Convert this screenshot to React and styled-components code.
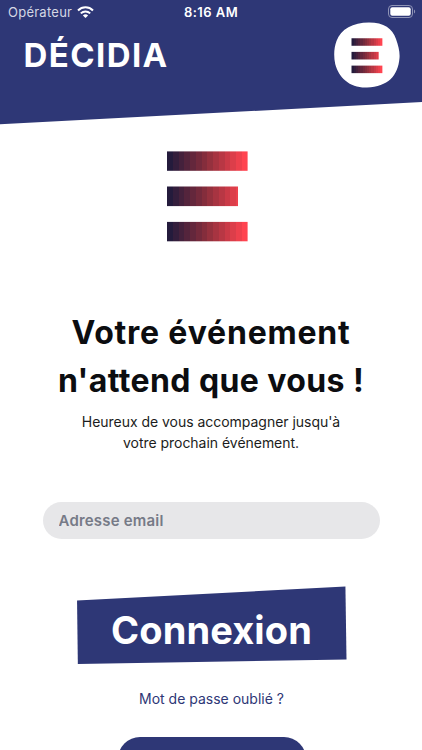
import React, { useState } from 'react';
import styled, { createGlobalStyle } from 'styled-components';

const navy = '#2e3776';

const GlobalStyle = createGlobalStyle`
  * {
    box-sizing: border-box;
  }

  body {
    margin: 0;
    background: #fff;
    overflow: hidden;
    font-family: Inter, "Liberation Sans", sans-serif;
  }
`;

const Screen = styled.div`
  display: flex;
  flex-direction: column;
  height: 750px;
  overflow: hidden;
`;

const Header = styled.header`
  flex: none;
  height: 125px;
  background: ${navy};
  color: #fff;
  clip-path: polygon(0 0, 100% 0, 100% 102px, 0 124.3px);
`;

const StatusBar = styled.div`
  display: grid;
  grid-template-columns: 1fr auto 1fr;
  align-items: center;
  height: 22px;
  padding: 2px 6px 0 8px;
  font-size: 13px;
  line-height: 20px;
`;

const Carrier = styled.div`
  display: flex;
  align-items: center;
  gap: 5px;
  color: #d5d7e4;
  letter-spacing: 0.25px;
`;

const Clock = styled.div`
  padding-right: 2px;
  font-weight: 600;
  letter-spacing: 0.45px;
`;

const BatteryIcon = styled.svg`
  justify-self: end;
`;

const TopRow = styled.div`
  display: flex;
  justify-content: space-between;
  padding: 0 22.5px 0 23.5px;
`;

const Brand = styled.div`
  padding-top: 13px;
  font-size: 33px;
  font-weight: 700;
  line-height: 40px;
  letter-spacing: 1.4px;
`;

const Main = styled.main`
  display: flex;
  flex-direction: column;
  align-items: center;
  padding-top: 26px;
`;

const LogoWrap = styled.div`
  display: flex;
  margin-right: 8px;
`;

const Title = styled.h1`
  margin: 67px 0 0;
  color: #0c0d10;
  font-size: 32px;
  font-weight: 700;
  line-height: 48px;
  text-align: center;
  white-space: nowrap;
`;

const TitleLine = styled.span`
  display: block;
  letter-spacing: ${p => p.$spacing};
`;

const Subtitle = styled.p`
  margin: 6px 0 0;
  color: #1b1c20;
  font-size: 14px;
  line-height: 21px;
  letter-spacing: -0.03px;
  text-align: center;
  white-space: nowrap;
`;

const EmailInput = styled.input`
  width: 337px;
  height: 37px;
  margin-top: 49px;
  padding: 0 16px 1px;
  border: 0;
  border-radius: 19px;
  background: #e7e7e9;
  color: #0c0d10;
  font-family: inherit;
  font-size: 15px;
  font-weight: 600;
  letter-spacing: 0.2px;

  &::placeholder {
    color: #767a87;
    opacity: 1;
  }
`;

const LoginButton = styled.button`
  width: 270px;
  height: 78px;
  margin-top: 47px;
  margin-left: 1px;
  padding: 9px 0 0;
  border: 0;
  background: ${navy};
  color: #fff;
  font-family: inherit;
  font-size: 38px;
  font-weight: 700;
  letter-spacing: 0.1px;
  clip-path: polygon(0.2% 14.5px, 99.6% 0.5px, 100% 73.5px, 0.5% 78px);
`;

const ForgotLink = styled.a`
  margin-top: 24px;
  margin-left: 1px;
  color: ${navy};
  font-size: 14px;
  line-height: 21px;
  text-decoration: none;
  white-space: nowrap;
`;

const SecondaryButton = styled.button`
  width: 188px;
  height: 44px;
  margin-top: 28px;
  margin-left: 2px;
  border: 0;
  border-radius: 22px;
  background: ${navy};
`;

const steps = 14;
const from = [36, 27, 60];
const mid = [140, 47, 60];
const to = [255, 68, 80];

// colour of one band of the logo, dark violet on the left to red on the right
function bandColor(i) {
  const t = (i / (steps - 1)) * 2;
  const a = t < 1 ? from : mid;
  const b = t < 1 ? mid : to;
  const k = t < 1 ? t : t - 1;
  return `rgb(${a.map((c, n) => Math.round(c + (b[n] - c) * k)).join(', ')})`;
}

// the E of the logo, its bars filled with hard-edged bands
function LogoMark({ id }) {
  return (
    <g fill={`url(#${id})`}>
      <linearGradient id={id} gradientUnits="userSpaceOnUse" x1="0" y1="0" x2="80.6" y2="0">
        {Array.from({ length: steps }, (_, i) => (
          <React.Fragment key={i}>
            <stop offset={i / steps} stopColor={bandColor(i)} />
            <stop offset={(i + 1) / steps} stopColor={bandColor(i)} />
          </React.Fragment>
        ))}
      </linearGradient>
      <rect y="0.4" width="80.6" height="19.4" />
      <rect y="35.5" width="71" height="19.6" />
      <rect y="70.9" width="80.6" height="19.4" />
    </g>
  );
}

function Logo() {
  return (
    <svg width="81" height="91" viewBox="0 0 81 91">
      <LogoMark id="logo-bands" />
    </svg>
  );
}

function LogoBadge() {
  return (
    <svg width="66" height="66" viewBox="0 0 66 66">
      <path
        d="M35 0.5C50 0.5 58.5 6.5 62 17C64.5 24 66 30 65.5 36C64 54 54 64.5 33 65.5C16 66.2 5 56 1.2 42C-0.5 34 0 26 2.5 19C7 7 19 0.5 35 0.5Z"
        fill="#fff"
      />
      <g transform="translate(17.5 16.1) scale(0.383 0.388)">
        <LogoMark id="badge-bands" />
      </g>
    </svg>
  );
}

function WifiIcon() {
  return (
    <svg width="17" height="13" viewBox="0 0 17 13" fill="none" stroke="#fff" strokeWidth="2">
      <path d="M1 4.5C5.2 0.3 11.8 0.3 16 4.5" />
      <path d="M3.8 7.4C6.5 4.8 10.5 4.8 13.2 7.4" />
      <path d="M8.5 12L5.9 9.4C7.4 8 9.6 8 11.1 9.4Z" fill="#fff" stroke="none" />
    </svg>
  );
}

function App() {
  const [email, setEmail] = useState('');

  return (
    <Screen>
      <GlobalStyle />
      <Header>
        <StatusBar>
          <Carrier>
            Opérateur
            <WifiIcon />
          </Carrier>
          <Clock>8:16 AM</Clock>
          <BatteryIcon width="28" height="14" viewBox="0 0 28 14">
            <rect x="0.5" y="0.5" width="24" height="12" rx="3.5" fill="none" stroke="#8f94b6" />
            <rect x="2.3" y="2.3" width="20.4" height="8.4" rx="2" fill="#fff" />
            <path d="M26 4.5C27.5 5 27.5 8 26 8.5Z" fill="#8f94b6" />
          </BatteryIcon>
        </StatusBar>
        <TopRow>
          <Brand>DÉCIDIA</Brand>
          <LogoBadge />
        </TopRow>
      </Header>
      <Main>
        <LogoWrap>
          <Logo />
        </LogoWrap>
        <Title>
          <TitleLine $spacing="0.8px">Votre événement</TitleLine>
          <TitleLine $spacing="0.4px">n'attend que vous !</TitleLine>
        </Title>
        <Subtitle>
          Heureux de vous accompagner jusqu'à
          <br />
          votre prochain événement.
        </Subtitle>
        <EmailInput
          type="email"
          placeholder="Adresse email"
          value={email}
          onChange={e => setEmail(e.target.value)}
        />
        <LoginButton>Connexion</LoginButton>
        <ForgotLink>Mot de passe oublié ?</ForgotLink>
        <SecondaryButton />
      </Main>
    </Screen>
  );
}

export default App;
